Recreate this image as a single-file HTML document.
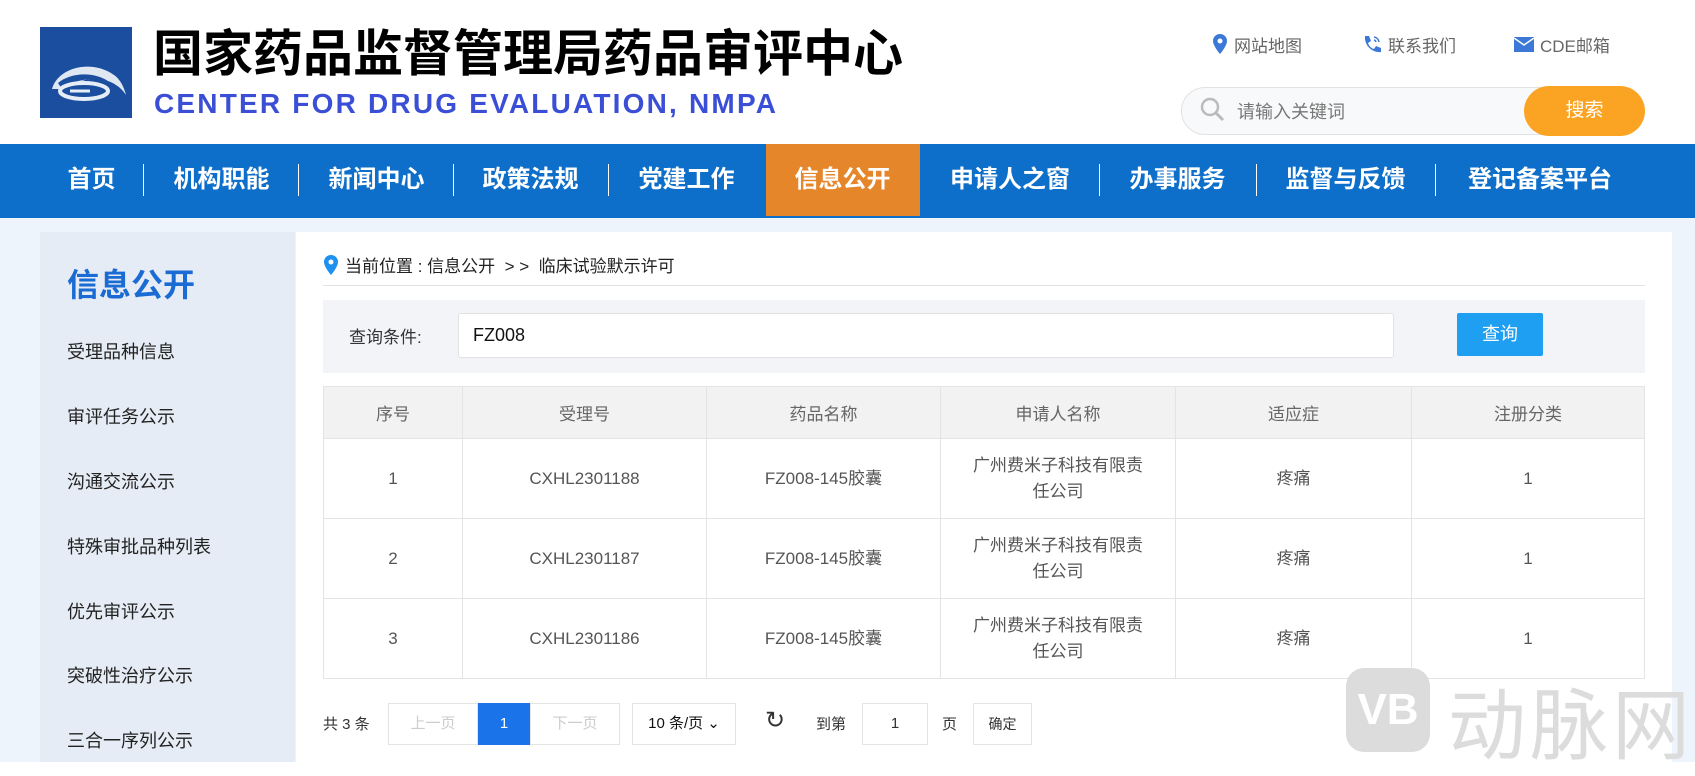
<!DOCTYPE html>
<html><head><meta charset="utf-8"><style>
*{margin:0;padding:0;box-sizing:border-box}
body{width:1695px;height:762px;overflow:hidden;background:#fff;font-family:"Liberation Sans","Noto Sans CJK SC",sans-serif;position:relative}
.a{position:absolute}
.nav{top:144px;left:0;width:1695px;height:74px;background:#0e6fca}
.ni{position:absolute;top:0;height:74px;line-height:72px;color:#fff;font-size:24px;font-weight:bold;text-align:center}
.sep{position:absolute;top:20px;width:1px;height:32px;background:#fff}
.side{left:40px;top:232px;width:255px;height:530px;background:#e6ecf5}
.si{position:absolute;left:27px;font-size:18px;color:#222}
table{border-collapse:collapse;position:absolute;left:323px;top:386px;width:1322px;font-size:17px;color:#555}
td,th{border:1px solid #e4e4e4;text-align:center;font-weight:normal}
th{height:52px;background:#f2f2f2;color:#666}
td{height:80px;line-height:26px}
.pb{position:absolute;top:703px;height:42px;border:1px solid #e4e4e4;background:#fff;font-size:15px;line-height:40px;text-align:center;color:#333}
</style></head><body>
<div class="a" style="left:40px;top:27px;width:92px;height:91px;background:#1c4ea0;overflow:hidden">
<svg width="92" height="91"><path d="M12 62c6-22 40-30 62-14c6 4 10 12 12 20c-6-10-20-18-36-16c-10 1-18 8-28 10z" fill="#dfe7f3"/><path d="M18 56c12-10 34-12 50-2c-14-4-34-2-46 8z" fill="#1c4ea0"/><ellipse cx="44" cy="64" rx="24" ry="8" fill="none" stroke="#e6edf7" stroke-width="4"/><path d="M30 64h20" stroke="#e6edf7" stroke-width="3"/></svg></div>
<div class="a" style="left:153px;top:14px;font-size:50px;font-weight:bold;color:#000;letter-spacing:0px;white-space:nowrap">国家药品监督管理局药品审评中心</div>
<div class="a" style="left:154px;top:88px;font-size:28px;font-weight:bold;color:#3b4fd6;letter-spacing:2.2px;white-space:nowrap">CENTER FOR DRUG EVALUATION, NMPA</div>
<svg class="a" style="left:1212px;top:33px" width="16" height="22"><path d="M8 1a7 7 0 0 0-7 7c0 5 7 13 7 13s7-8 7-13a7 7 0 0 0-7-7z" fill="#3c78d8"/><circle cx="8" cy="8" r="2.5" fill="#fff"/></svg>
<div class="a" style="left:1234px;top:32px;font-size:17px;color:#666">网站地图</div>
<svg class="a" style="left:1362px;top:34px" width="20" height="20"><path d="M3 2l4 0 2 5-3 2c1 3 3 5 6 6l2-3 5 2v4c-9 1-17-7-16-16z" fill="#3c78d8"/><path d="M12 3a6 6 0 0 1 5 5M12 6a3 3 0 0 1 2 2" stroke="#3c78d8" stroke-width="1.5" fill="none"/></svg>
<div class="a" style="left:1388px;top:32px;font-size:17px;color:#666">联系我们</div>
<svg class="a" style="left:1514px;top:37px" width="20" height="15"><rect width="20" height="15" fill="#3c78d8"/><path d="M0 1l10 7 10-7" stroke="#fff" stroke-width="1.5" fill="none"/></svg>
<div class="a" style="left:1540px;top:32px;font-size:17px;color:#666">CDE邮箱</div>
<div class="a" style="left:1181px;top:87px;width:462px;height:48px;border:1px solid #e2e2e2;border-radius:24px;background:#f8f9fb"></div>
<svg class="a" style="left:1200px;top:97px" width="26" height="26"><circle cx="10" cy="10" r="8" fill="none" stroke="#bbb" stroke-width="2.5"/><path d="M16 16l7 7" stroke="#bbb" stroke-width="3"/></svg>
<div class="a" style="left:1237px;top:98px;font-size:18px;color:#777">请输入关键词</div>
<div class="a" style="left:1524px;top:86px;width:121px;height:50px;border-radius:25px;background:#fba322;color:#fff;font-size:19px;line-height:50px;text-align:center">搜索</div>
<div class="a nav">
<div class="ni" style="left:766px;width:154px;height:72px;background:#e5862b"></div>
<div class="ni" style="left:14px;width:155px">首页</div>
<div class="ni" style="left:144px;width:155px">机构职能</div>
<div class="ni" style="left:299px;width:155px">新闻中心</div>
<div class="ni" style="left:453px;width:155px">政策法规</div>
<div class="ni" style="left:609px;width:155px">党建工作</div>
<div class="ni" style="left:765px;width:155px">信息公开</div>
<div class="ni" style="left:920px;width:180px">申请人之窗</div>
<div class="ni" style="left:1100px;width:155px">办事服务</div>
<div class="ni" style="left:1268px;width:155px">监督与反馈</div>
<div class="ni" style="left:1435px;width:210px">登记备案平台</div>
<div class="sep" style="left:143px"></div><div class="sep" style="left:298px"></div><div class="sep" style="left:453px"></div><div class="sep" style="left:608px"></div><div class="sep" style="left:1099px"></div><div class="sep" style="left:1256px"></div><div class="sep" style="left:1435px"></div>
</div>
<div class="a" style="left:0;top:218px;width:1695px;height:544px;background:#eef4fc"></div>
<div class="a" style="left:296px;top:232px;width:1376px;height:530px;background:#fff"></div>
<div class="a side">
<div class="si" style="top:28px;font-size:32px;font-weight:bold;color:#1a6bd4">信息公开</div>
<div class="si" style="top:106px">受理品种信息</div>
<div class="si" style="top:171px">审评任务公示</div>
<div class="si" style="top:236px">沟通交流公示</div>
<div class="si" style="top:301px">特殊审批品种列表</div>
<div class="si" style="top:366px">优先审评公示</div>
<div class="si" style="top:430px">突破性治疗公示</div>
<div class="si" style="top:495px">三合一序列公示</div>
</div>
<svg class="a" style="left:323px;top:254px" width="16" height="22"><path d="M8 1a7 7 0 0 0-7 7c0 5 7 13 7 13s7-8 7-13a7 7 0 0 0-7-7z" fill="#1e90f0"/><circle cx="8" cy="8" r="2.5" fill="#fff"/></svg>
<div class="a" style="left:345px;top:252px;font-size:17px;color:#222">当前位置 : 信息公开 &nbsp;&gt; &gt; &nbsp;临床试验默示许可</div>
<div class="a" style="left:323px;top:285px;width:1322px;height:1px;background:#e2e2e2"></div>
<div class="a" style="left:323px;top:300px;width:1322px;height:73px;background:#f2f4f8"></div>
<div class="a" style="left:349px;top:323px;font-size:17px;color:#333">查询条件:</div>
<div class="a" style="left:458px;top:313px;width:936px;height:45px;background:#fff;border:1px solid #e2e2e2;border-radius:3px;font-size:18px;line-height:43px;padding-left:14px;color:#111">FZ008</div>
<div class="a" style="left:1457px;top:313px;width:86px;height:43px;background:#1e9ff2;border-radius:2px;color:#fff;font-size:18px;line-height:43px;text-align:center">查询</div>
<table>
<tr><th style="width:139px">序号</th><th style="width:244px">受理号</th><th style="width:234px">药品名称</th><th style="width:235px">申请人名称</th><th style="width:236px">适应症</th><th>注册分类</th></tr>
<tr><td>1</td><td>CXHL2301188</td><td>FZ008-145胶囊</td><td>广州费米子科技有限责<br>任公司</td><td>疼痛</td><td>1</td></tr>
<tr><td>2</td><td>CXHL2301187</td><td>FZ008-145胶囊</td><td>广州费米子科技有限责<br>任公司</td><td>疼痛</td><td>1</td></tr>
<tr><td>3</td><td>CXHL2301186</td><td>FZ008-145胶囊</td><td>广州费米子科技有限责<br>任公司</td><td>疼痛</td><td>1</td></tr>
</table>
<div class="a" style="left:323px;top:713px;font-size:15px;color:#333">共 3 条</div>
<div class="pb" style="left:388px;width:90px;color:#ccc">上一页</div>
<div class="pb" style="left:478px;width:52px;background:#1a73e8;border-color:#1a73e8;color:#fff">1</div>
<div class="pb" style="left:530px;width:90px;color:#ccc">下一页</div>
<div class="pb" style="left:632px;width:104px;color:#111">10 条/页 ⌄</div>
<div class="a" style="left:765px;top:706px;font-size:24px;color:#333">↻</div>
<div class="a" style="left:816px;top:713px;font-size:15px;color:#333">到第</div>
<div class="pb" style="left:862px;width:66px">1</div>
<div class="a" style="left:942px;top:713px;font-size:15px;color:#333">页</div>
<div class="pb" style="left:973px;width:59px;font-size:14px">确定</div>
<div class="a" style="left:1346px;top:668px;width:84px;height:84px;border-radius:18px;background:#dcdcdc;color:#fff;font-size:44px;font-weight:bold;line-height:84px;text-align:center">VB</div>
<div class="a" style="left:1448px;top:664px;font-size:78px;color:#dcdcdc;letter-spacing:4px;white-space:nowrap">动脉网</div>
</body></html>
